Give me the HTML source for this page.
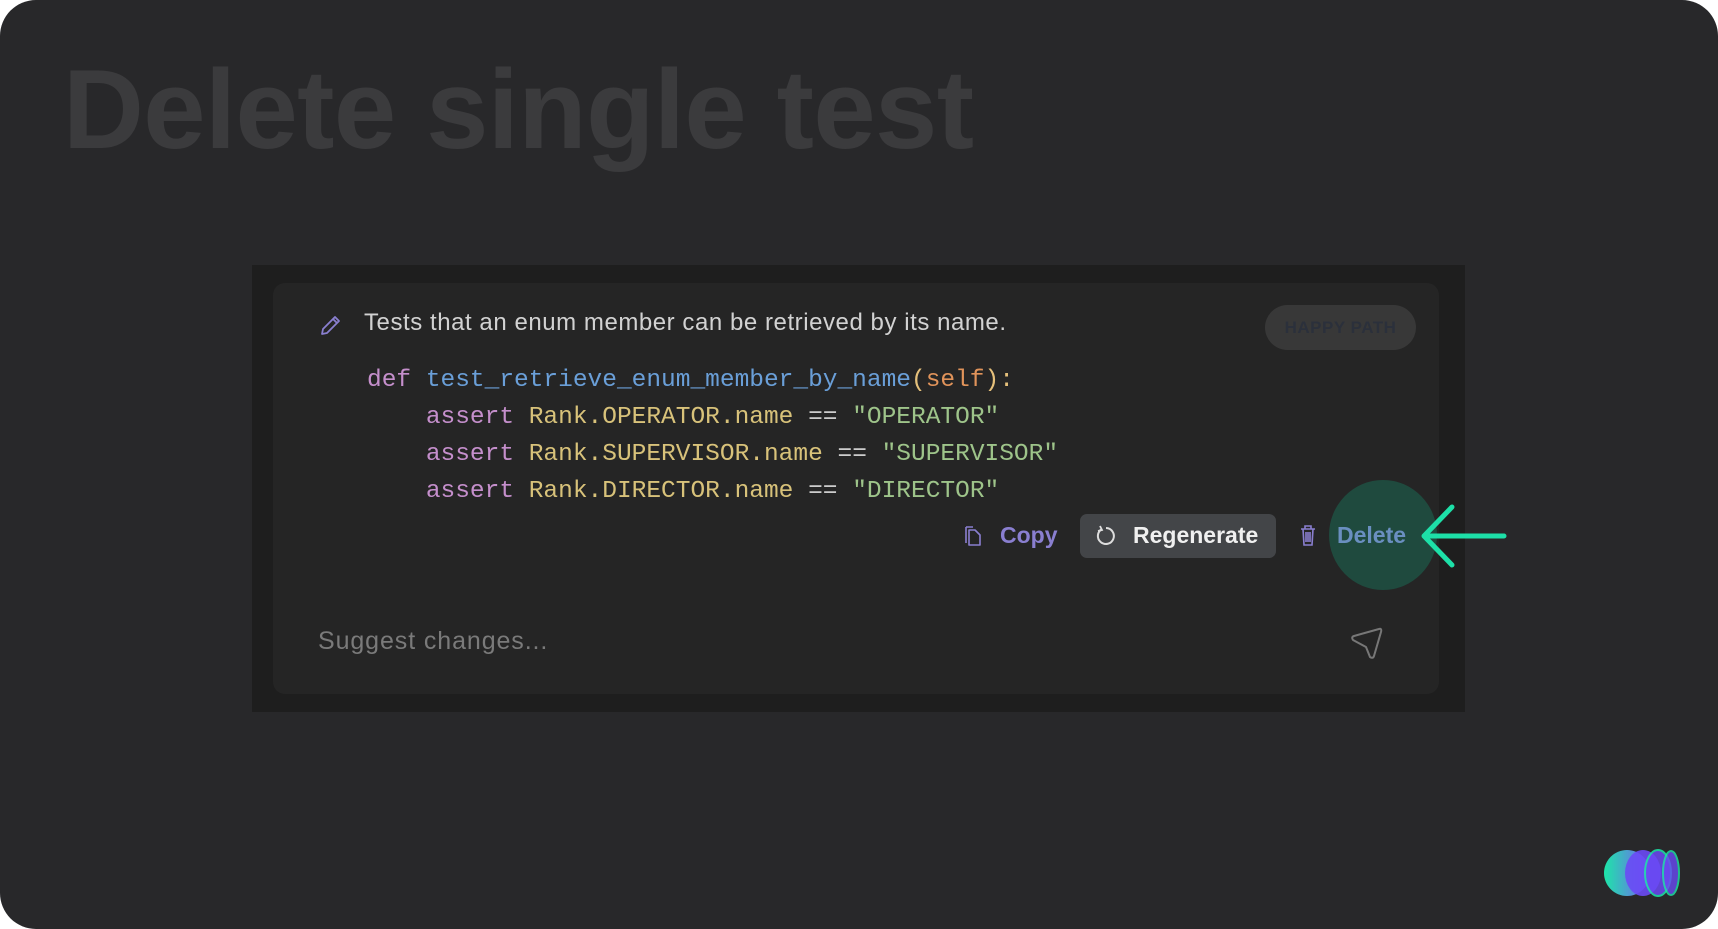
<!DOCTYPE html>
<html><head><meta charset="utf-8"><style>
html,body{margin:0;padding:0;background:#fff;}
body{width:1718px;height:929px;position:relative;overflow:hidden;font-family:"Liberation Sans",sans-serif;}
.bg{position:absolute;left:0;top:0;width:1718px;height:929px;background:#28282a;border-radius:36px;}
.title{position:absolute;left:63px;top:45px;font-size:112px;font-weight:bold;color:#3b3b3d;letter-spacing:-0.6px;white-space:nowrap;}
.outer{position:absolute;left:252px;top:265px;width:1213px;height:447px;background:#1e1e1e;}
.card{position:absolute;left:273px;top:283px;width:1166px;height:411px;background:#252525;border-radius:12px;}
.desc{position:absolute;left:364px;top:309px;font-size:24px;letter-spacing:0.55px;color:#d2d2d2;white-space:nowrap;}
.pill{position:absolute;left:1265px;top:305px;width:151px;height:45px;border-radius:23px;background:#383838;color:#2b303b;font-weight:bold;font-size:17px;line-height:45px;text-align:center;letter-spacing:0.5px;}
.code{position:absolute;left:367px;top:362px;font-family:"Liberation Mono",monospace;font-size:24.5px;line-height:37px;white-space:pre;color:#ccc;}
.k{color:#c58fcc}.f{color:#6a9fd8}.s{color:#e0935a}.y{color:#e5c07b}.g{color:#9ec48a}.c{color:#d8c27a}
.btn{position:absolute;font-size:23px;font-weight:bold;white-space:nowrap;}
.regen{position:absolute;left:1080px;top:514px;width:196px;height:44px;border-radius:7px;background:#434548;}
.circle{position:absolute;left:1329px;top:480px;width:108px;height:110px;border-radius:50%;background:#1f4a3e;}
.sug{position:absolute;left:318px;top:627px;font-size:25px;letter-spacing:0.9px;color:#7a7a7a;white-space:nowrap;}
</style></head><body>
<div class="bg"></div>
<div class="title">Delete single test</div>
<div class="outer"></div>
<div class="card"></div>
<svg style="position:absolute;left:318px;top:314px" width="24" height="24" viewBox="0 0 24 24"><path d="M4 20 L5 15 L17 3 L21 7 L9 19 Z M15 5 L19 9" fill="none" stroke="#8a7fd0" stroke-width="1.8" stroke-linejoin="round"/></svg>
<div class="desc">Tests that an enum member can be retrieved by its name.</div>
<div class="pill">HAPPY PATH</div>
<div class="code"><span class="k">def</span> <span class="f">test_retrieve_enum_member_by_name</span><span class="y">(</span><span class="s">self</span><span class="y">):</span>
    <span class="k">assert</span> <span class="c">Rank.OPERATOR.name</span> == <span class="g">"OPERATOR"</span>
    <span class="k">assert</span> <span class="c">Rank.SUPERVISOR.name</span> == <span class="g">"SUPERVISOR"</span>
    <span class="k">assert</span> <span class="c">Rank.DIRECTOR.name</span> == <span class="g">"DIRECTOR"</span></div>
<svg style="position:absolute;left:963px;top:524px" width="20" height="24" viewBox="0 0 20 24"><path d="M3 3 H10 M3 3 V19" fill="none" stroke="#8a7fd0" stroke-width="1.6"/><path d="M6 6 H12 L17 11 V21 H6 Z" fill="none" stroke="#8a7fd0" stroke-width="1.6" stroke-linejoin="round"/></svg>
<div class="btn" style="left:1000px;top:522px;color:#8a7fd0">Copy</div>
<div class="regen"></div>
<svg style="position:absolute;left:1094px;top:524px" width="24" height="24" viewBox="0 0 24 24"><path d="M8 5 A8 8 0 1 0 12 4" fill="none" stroke="#ddd" stroke-width="2"/><path d="M6 2 L8 6 L4 7" fill="none" stroke="#ddd" stroke-width="1.8"/></svg>
<div class="btn" style="left:1133px;top:522px;color:#f0f0f0">Regenerate</div>
<div class="circle"></div>
<svg style="position:absolute;left:1298px;top:524px" width="20" height="24" viewBox="0 0 20 24"><path d="M3 5 H17 M7 5 V2 H13 V5 M5 5 L6 21 H14 L15 5 M8 8 V18 M10 8 V18 M12 8 V18" fill="none" stroke="#8a7fd0" stroke-width="1.6"/></svg>
<div class="btn" style="left:1337px;top:522px;color:#6a8fc0">Delete</div>
<svg style="position:absolute;left:1410px;top:500px" width="100" height="72" viewBox="0 0 100 72"><path d="M94 36 H14 M42 7 L14 36 L42 65" fill="none" stroke="#1de0a8" stroke-width="5" stroke-linecap="round" stroke-linejoin="round"/></svg>
<div class="sug">Suggest changes...</div>
<svg style="position:absolute;left:1348px;top:624px" width="38" height="38" viewBox="0 0 38 38"><path d="M5 16 Q3 13 6 12 L31 5 Q34 4 33 8 L26 32 Q25 35 22 33 L18 23 Z" fill="none" stroke="#777" stroke-width="2" stroke-linejoin="round"/></svg>
<svg style="position:absolute;left:1600px;top:845px" width="84" height="56" viewBox="0 0 84 56">
<defs><linearGradient id="a" x1="0" x2="1"><stop offset="0" stop-color="#1de6a8"/><stop offset="1" stop-color="#7a5cf5"/></linearGradient></defs>
<circle cx="27" cy="28" r="23" fill="url(#a)"/>
<ellipse cx="43" cy="28" rx="18" ry="23" fill="#6a4af5" opacity="0.9"/>
<ellipse cx="58" cy="28" rx="13" ry="23" fill="#6a4af5" opacity="0.85" stroke="#1de6a8" stroke-width="2"/>
<ellipse cx="71" cy="28" rx="8" ry="22" fill="#6a4af5" opacity="0.8" stroke="#1de6a8" stroke-width="2"/>
</svg>
</body></html>
